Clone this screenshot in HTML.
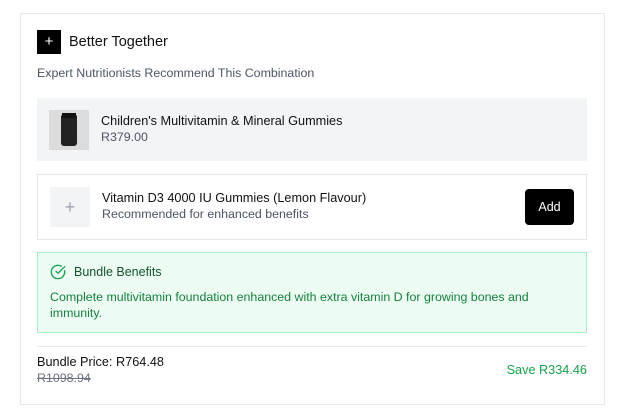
<!DOCTYPE html>
<html><head><style>
*{margin:0;padding:0;box-sizing:border-box}
body{width:644px;height:420px;background:#fff;font-family:"Liberation Sans",sans-serif;position:relative;overflow:hidden}
.a{position:absolute}
.card{left:20px;top:13px;width:585px;height:392px;border:1px solid #e5e7eb}
.t{white-space:nowrap}
</style></head><body>
<div class="a card"></div>
<div class="a" style="left:37px;top:30px;width:24px;height:24px;background:#000;color:#fff;font-size:15px;line-height:24px;text-align:center">+</div>
<div class="a t" style="left:69px;top:34px;font-size:14.5px;color:#111">Better Together</div>
<div class="a t" style="left:37px;top:66px;font-size:12.4px;color:#4b5563">Expert Nutritionists Recommend This Combination</div>
<div class="a" style="left:37px;top:98px;width:550px;height:63px;background:#f3f4f6"></div>
<div class="a" style="left:49px;top:110px;width:40px;height:40px;background:#dcdcdc"></div>
<div class="a" style="left:61px;top:114px;width:16px;height:32px;background:#222;border-radius:3px"></div>
<div class="a" style="left:62px;top:113px;width:14px;height:5px;background:#111"></div>
<div class="a t" style="left:101px;top:114px;font-size:12.7px;color:#111">Children's Multivitamin &amp; Mineral Gummies</div>
<div class="a t" style="left:101px;top:130px;font-size:12.4px;color:#4b5563">R379.00</div>
<div class="a" style="left:37px;top:174px;width:550px;height:66px;border:1px solid #e5e7eb"></div>
<div class="a" style="left:50px;top:187px;width:40px;height:40px;background:#f3f4f6;color:#9ca3af;font-size:18px;line-height:40px;text-align:center">+</div>
<div class="a t" style="left:102px;top:191px;font-size:12.7px;color:#111">Vitamin D3 4000 IU Gummies (Lemon Flavour)</div>
<div class="a t" style="left:102px;top:207px;font-size:12.4px;color:#4b5563">Recommended for enhanced benefits</div>
<div class="a" style="left:525px;top:189px;width:49px;height:36px;background:#000;border-radius:4px;color:#fff;font-size:12.5px;line-height:36px;text-align:center">Add</div>
<div class="a" style="left:37px;top:252px;width:550px;height:81px;background:#edfcf3;border:1px solid #a7f0c4"></div>
<svg class="a" style="left:50px;top:264px" width="16" height="16" viewBox="0 0 24 24" fill="none" stroke="#16a34a" stroke-width="2" stroke-linecap="round" stroke-linejoin="round"><path d="M21.8 10A10 10 0 1 1 17 3.3"/><path d="m9 11 3 3L22 4"/></svg>
<div class="a t" style="left:74px;top:265px;font-size:12.5px;color:#14532d">Bundle Benefits</div>
<div class="a" style="left:50px;top:289px;width:495px;font-size:12.4px;line-height:16px;color:#15803d">Complete multivitamin foundation enhanced with extra vitamin D for growing bones and immunity.</div>
<div class="a" style="left:37px;top:346px;width:550px;height:1px;background:#e5e7eb"></div>
<div class="a t" style="left:37px;top:355px;font-size:12.7px;color:#111">Bundle Price: R764.48</div>
<div class="a t" style="left:37px;top:371px;font-size:12.4px;color:#6b7280;text-decoration:line-through">R1098.94</div>
<div class="a t" style="right:57px;top:363px;font-size:12.7px;color:#16a34a">Save R334.46</div>
</body></html>
